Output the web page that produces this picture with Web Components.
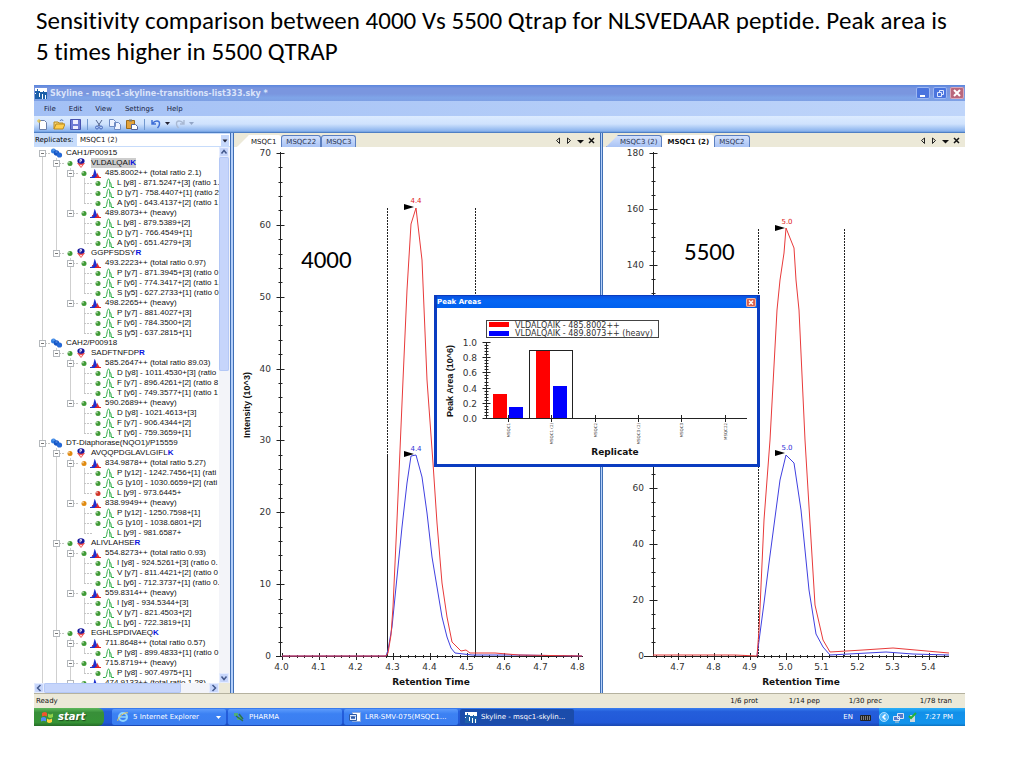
<!DOCTYPE html>
<html lang="en">
<head>
<meta charset="utf-8">
<title>Sensitivity comparison</title>
<style>
  body { margin: 0; background: #fff; color: #000; font-family: "DejaVu Sans", sans-serif; }
</style>
</head>
<body>
<slide-page>
  <span slot="title">Sensitivity comparison between 4000 Vs 5500 Qtrap for NLSVEDAAR peptide. Peak area is 5 times higher in 5500 QTRAP</span>
  <sky-window></sky-window>
</slide-page>

<script>
const define = (name, html, setup) => customElements.define(name, class extends HTMLElement {
  constructor() {
    super();
    this.attachShadow({ mode: 'open' });
  }
  connectedCallback() {
    const t = document.createElement('template');
    t.innerHTML = typeof html === 'function' ? html(this) : html;
    this.shadowRoot.replaceChildren(t.content.cloneNode(true));
    if (setup) setup(this);
  }
});

const BUTTON = `button { font: inherit; color: inherit; background: none; border: 0; padding: 0; margin: 0; text-align: left; white-space: nowrap; }`;

/* ---------- slide ---------- */
define('slide-page', `
<style>
  :host { display: block; padding: 5px 59px 42px 34px; }
  h1 { margin: 0 0 18px 2px; font: 400 25px/31px Carlito, Calibri, Lato, sans-serif; font-variant-ligatures: none; font-kerning: none; }
</style>
<h1><slot name="title"></slot></h1>
<slot></slot>`);

/* ---------- application window ---------- */
define('sky-window', `
<style>
  :host { display: block; font-size: 7px; line-height: 10px; }
  main { position: relative; display: grid; grid-template-columns: 196px 4px minmax(0, 366fr) 3px minmax(0, 362fr); border-top: 1px solid #4f7fc4; }
  .split { background: #b5d0fb; border: solid #3f6fb5; border-width: 0 1px; }
  peak-areas { position: absolute; left: 400px; top: 162px; width: 326px; }
</style>
<title-bar>Skyline - msqc1-skyline-transitions-list333.sky *</title-bar>
<menu-bar></menu-bar>
<tool-bar></tool-bar>
<main>
  <target-panel></target-panel>
  <div class="split"></div>
  <chart-pane chart="left"></chart-pane>
  <div class="split"></div>
  <chart-pane chart="right"></chart-pane>
  <peak-areas></peak-areas>
</main>
<status-bar></status-bar>
<task-bar></task-bar>`);

const LOGO = `<svg width="12" height="11" viewBox="0 0 12 11"><rect width="12" height="11" fill="#1d5fa8"/><path d="M0 0h12v4H9V3H8v1H5V3H3V1H2v2H0z" fill="#fff"/><path d="M0 5.500h1M4.500 5v4M7.500 6v5M10.500 7v4" stroke="#fff"/></svg>`;

define('title-bar', `
<style>
  ${BUTTON}
  :host { display: flex; align-items: center; gap: 3px; height: 16px; padding: 0 1px; background: linear-gradient(#5a86dd, #7a96df 20%, #7a96df 55%, #7fa5e8 80%, #7d9fe4); color: #d9e4fa; font: bold 8px/14px "DejaVu Sans", sans-serif; }
  span { flex: 1; white-space: nowrap; padding-top: 2px; }
  button { width: 14px; height: 12px; border-radius: 2px; background: #4a74de; box-shadow: inset 0 0 0 1px #9db8f2; }
  button.x { background: #b9677c; box-shadow: inset 0 0 0 1px #d9a9bb; }
  svg { display: block; }
</style>
${LOGO}<span><slot></slot></span>
<button aria-label="Minimize"><svg width="14" height="12"><path d="M4 9h5" stroke="#fff" stroke-width="2"/></svg></button>
<button aria-label="Restore"><svg width="14" height="12" fill="none" stroke="#dfe8ff"><path d="M6.500 5V3.500h4v4H9M4.500 5.500h4v4h-4z"/></svg></button>
<button class="x" aria-label="Close"><svg width="14" height="12"><path d="M4 3l6 6M10 3l-6 6" stroke="#fff" stroke-width="2"/></svg></button>`);

define('menu-bar', `
<style>
  ${BUTTON}
  :host { display: flex; gap: 13px; height: 15px; padding: 0 10px; line-height: 16px; background: linear-gradient(90deg, #a3c0f5, #b4cdf8 60%, #bfd5fa); color: #16223c; }
</style>
<button>File</button><button>Edit</button><button>View</button><button>Settings</button><button>Help</button>`);

define('tool-bar', `
<style>
  ${BUTTON}
  :host { display: flex; align-items: center; gap: 5px; height: 16px; padding: 0 3px; background: linear-gradient(#dcebff, #cfe2fd 50%, #8db5ee 92%, #6d9ddd); }
  svg { display: block; }
  i { width: 1px; height: 11px; background: #7098d0; margin: 0 1px; }
  .arrow { margin-left: -2px; }
</style>
<button aria-label="New"><svg width="11" height="11"><path d="M2.500 1.500h5l2 2v7h-7z" fill="#fff" stroke="#6b7fa8"/><path d="M0 2h4M2 0v4" stroke="#e6c33c"/></svg></button>
<button aria-label="Open"><svg width="12" height="11"><path d="M1 10V3h4l1 1h4v2" fill="#f5d679" stroke="#b98a20"/><path d="M1 10l2-5h9l-2 5z" fill="#ffcf4e" stroke="#b98a20"/><path d="M7 2c1-2 3-1 3 0" fill="none" stroke="#3b63b5"/></svg></button>
<button aria-label="Save"><svg width="11" height="11"><path d="M.5.5h10v10h-10z" fill="#6f7bd6" stroke="#4652b0"/><path d="M3 1h5v4H3zM3 7h5v3H3z" fill="#eef"/></svg></button>
<i></i>
<button aria-label="Cut"><svg width="10" height="11" fill="none"><path d="M2 1l4 6M8 1L4 7" stroke="#54658f"/><circle cx="3" cy="8.500" r="1.500" stroke="#4a68bd"/><circle cx="7" cy="8.500" r="1.500" stroke="#4a68bd"/></svg></button>
<button aria-label="Copy"><svg width="12" height="11" fill="#eef3ff" stroke="#6e8bc4"><path d="M.5.500h4l2 2v5h-6zM5.500 3.500h4l2 2v5h-6z"/></svg></button>
<button aria-label="Paste"><svg width="12" height="11"><path d="M.5 1.500h8v8h-8z" fill="#e3a33b" stroke="#9a6a1c"/><path d="M3 .500h3v2H3z" fill="#777"/><path d="M5.500 5.500h4l2 2v3h-6z" fill="#fff" stroke="#55659a"/></svg></button>
<i></i>
<button aria-label="Undo"><svg width="10" height="10" fill="none" stroke="#3f6fd6" stroke-width="1.500"><path d="M1 1v4h4M1.500 4.500C4 1 9 1 8.500 5c0 2-1 3-2 4"/></svg></button>
<svg class="arrow" width="6" height="4"><path d="M1 0h5L3.500 3z" fill="#223"/></svg>
<button aria-label="Redo"><svg width="10" height="10" fill="none" stroke="#a9b9d3" stroke-width="1.400"><path d="M9 1v4H5M8.500 4.500C6 1 1 1 1.500 5c0 2 1 3 2 4"/></svg></button>
<svg class="arrow" width="6" height="4"><path d="M1 0h5L3.500 3z" fill="#93a6c6"/></svg>`);

/* ---------- tree ---------- */
/* [level, text, dot colour]; peptides end in a highlighted residue */
const TREE = [
  [0,'CAH1/P00915'],
  [1,'VLDALQAIK','g'],
  [2,'485.8002++ (total ratio 2.1)','g'],[3,'L [y8] - 871.5247+[3] (ratio 1.','g'],[3,'D [y7] - 758.4407+[1] (ratio 2','g'],[3,'A [y6] - 643.4137+[2] (ratio 1','g'],
  [2,'489.8073++ (heavy)','g'],[3,'L [y8] - 879.5389+[2]','g'],[3,'D [y7] - 766.4549+[1]','g'],[3,'A [y6] - 651.4279+[3]','g'],
  [1,'GGPFSDSYR','g'],
  [2,'493.2223++ (total ratio 0.97)','g'],[3,'P [y7] - 871.3945+[3] (ratio 0','g'],[3,'F [y6] - 774.3417+[2] (ratio 1.','g'],[3,'S [y5] - 627.2733+[1] (ratio 0','g'],
  [2,'498.2265++ (heavy)','g'],[3,'P [y7] - 881.4027+[3]','g'],[3,'F [y6] - 784.3500+[2]','g'],[3,'S [y5] - 637.2815+[1]','g'],
  [0,'CAH2/P00918'],
  [1,'SADFTNFDPR','g'],
  [2,'585.2647++ (total ratio 89.03)','g'],[3,'D [y8] - 1011.4530+[3] (ratio','g'],[3,'F [y7] - 896.4261+[2] (ratio 8','g'],[3,'T [y6] - 749.3577+[1] (ratio 1','g'],
  [2,'590.2689++ (heavy)','g'],[3,'D [y8] - 1021.4613+[3]','g'],[3,'F [y7] - 906.4344+[2]','g'],[3,'T [y6] - 759.3659+[1]','g'],
  [0,'DT-Diaphorase(NQO1)/P15559'],
  [1,'AVQQPDGLAVLGIFLK','o'],
  [2,'834.9878++ (total ratio 5.27)','o'],[3,'P [y12] - 1242.7456+[1] (rati','g'],[3,'G [y10] - 1030.6659+[2] (rati','g'],[3,'L [y9] - 973.6445+','r'],
  [2,'838.9949++ (heavy)','o'],[3,'P [y12] - 1250.7598+[1]','g'],[3,'G [y10] - 1038.6801+[2]','g'],[3,'L [y9] - 981.6587+',''],
  [1,'ALIVLAHSER','g'],
  [2,'554.8273++ (total ratio 0.93)','g'],[3,'I [y8] - 924.5261+[3] (ratio 0.','g'],[3,'V [y7] - 811.4421+[2] (ratio 0','g'],[3,'L [y6] - 712.3737+[1] (ratio 0.','g'],
  [2,'559.8314++ (heavy)','g'],[3,'I [y8] - 934.5344+[3]','g'],[3,'V [y7] - 821.4503+[2]','g'],[3,'L [y6] - 722.3819+[1]','g'],
  [1,'EGHLSPDIVAEQK','g'],
  [2,'711.8648++ (total ratio 0.57)','g'],[3,'P [y8] - 899.4833+[1] (ratio 0','g'],
  [2,'715.8719++ (heavy)','g'],[3,'P [y8] - 907.4975+[1]','g'],
  [2,'474.9133++ (total ratio 1.28)','g']
];
const DOTS = { g: '#3f9a35', o: '#e08a10', r: '#d03328' };
const ICONS = [
  '<circle cx="2.500" cy="3" r="2.500" fill="#2f7de0"/><circle cx="5.500" cy="5" r="2.700" fill="#1656c4"/><circle cx="8.500" cy="7" r="2.600" fill="#2468d6"/><path d="M1.500 2h2M4.500 4h2" stroke="#9cc6ff" stroke-width=".7"/>',
  '<path d="M0 5h8L4 10z" fill="#ef5050"/><path d="M3 7h2L4 9z" fill="#fff"/><ellipse cx="4" cy="3" rx="3.600" ry="2.800" fill="#15159c"/><path d="M3 4.500V1.500h1.500v1.500H3" fill="none" stroke="#fff" stroke-width=".8"/>',
  '<path d="M1 9C3 8.500 3.500 6 4.500 1 5.500 1 6.500 8 9 9z" fill="#1c2fd0"/><path d="M7 4.500l2.500 4.500H6.500z" fill="#e83030"/><path d="M0 9.500h5" stroke="#1c2fd0"/><path d="M5 9.500h6M2 8l1.500-1" stroke="#e02020"/>',
  '<path d="M0 9.500h2.500C4 9 4 1 5.500 1S6.500 6 7 9M6.500 5c1-1.500 1.500 0 2 4.500H11" fill="none" stroke="#2fae48" stroke-width="1"/>'
];
const guides = TREE.map(([level], i) => {
  const out = [];
  for (let c = 0; c <= level; c++) {
    const next = TREE.slice(i + 1).find(n => n[0] <= c);
    const more = next ? next[0] === c : c < 2;
    const top = c === level && i === 0 ? 5 : 0;
    if (c === level) out.push([c, top, more ? 10 : 5]);
    else if (more) out.push([c, 0, 10]);
  }
  return out;
});
define('tree-row', el => {
  const i = +el.getAttribute('index'), [level, text, dot] = TREE[i];
  const hasDot = level > 0, x = level * 14 + 7, iconX = level === 0 ? 16 : (level + 2) * 14 - (level === 3 ? 2 : level - 1);
  const width = (level + (hasDot ? 3 : 2)) * 14 + (level === 0 ? 3 : level === 3 ? -2 : 0);
  let s = guides[i].map(([c, a, b]) => `<path d="M${c * 14 + 7.5} ${a}V${b}" stroke="#cfcfcf"/>`).join('');
  s += `<path d="M${x} 5.500h${level === 0 ? 8 : 9}" stroke="#c4c4c4" stroke-dasharray="2 1"/>`;
  if (level < 3) s += `<rect x="${x - 2.5}" y="2.500" width="6" height="6" fill="#fff" stroke="#b4b8bc"/><path d="M${x - 1} 5.500h3" stroke="#777"/>`;
  if (dot) s += `<circle cx="${x + 14}" cy="5.500" r="2.500" fill="${DOTS[dot]}"/><circle cx="${x + 13}" cy="4.500" r=".9" fill="#fff" opacity=".6"/>`;
  s += `<g transform="translate(${iconX} 0)">${ICONS[level]}</g>`;
  const label = level === 1 ? `${text.slice(0, -1)}<b>${text.slice(-1)}</b>` : text;
  return `<style>
    :host { display: flex; height: 10px; font: 8px/10px "Liberation Sans", Arial, sans-serif; color: #111; white-space: nowrap; }
    svg { flex: none; display: block; }
    b { color: #0a14e0; }
    .sel { background: #cdcdcd; }
  </style><svg width="${width}" height="10">${s}</svg><span class="${i === 1 ? 'sel' : ''}">${label}</span>`;
});

define('scroll-bar', el => {
  const v = el.hasAttribute('vertical');
  return `<style>
    ${BUTTON}
    :host { display: flex; flex-direction: ${v ? 'column' : 'row'}; background: #f3f4f9; }
    button { flex: none; width: 10px; height: 10px; border-radius: 2px; background: #c6d5fb; box-shadow: inset 0 0 0 1px #e6edff; }
    svg { display: block; }
    div { flex: 0 0 ${v ? '40%' : '74%'}; width: ${v ? '10px' : 'auto'}; border-radius: 2px; background: #c6d5fb; box-shadow: inset 0 0 0 1px #b4c8f6; }
    i { flex: 1; }
  </style>
  <button aria-label="Back"><svg width="10" height="10" fill="none" stroke="#44598c" stroke-width="1.500"><path d="${v ? 'M2.500 6.500l2.500-3 2.500 3' : 'M6.500 2l-3 3 3 3'}"/></svg></button>
  <div></div><i></i>
  <button aria-label="Forward"><svg width="10" height="10" fill="none" stroke="#44598c" stroke-width="1.500"><path d="${v ? 'M2.500 3.500l2.500 3 2.500-3' : 'M3.500 2l3 3-3 3'}"/></svg></button>`;
});

define('target-panel', `
<style>
  :host { display: grid; grid-template-columns: minmax(0, 1fr) 11px; grid-template-rows: 14px minmax(0, 1fr) 10px; background: #fff; }
  header { grid-column: 1 / 3; display: flex; align-items: center; background: #c7dcfb; }
  label { width: 42px; padding-left: 1px; }
  .box { position: relative; flex: 1; height: 12px; }
  select { appearance: none; width: 100%; height: 12px; box-sizing: border-box; border: 0; border-radius: 0; margin: 0; padding: 0 12px 0 3px; background: #fff; font: 7px/12px "DejaVu Sans", sans-serif; color: #111; display: block; }
  .box svg { position: absolute; right: 1px; top: 1px; background: #c6d8fb; pointer-events: none; }
  .tree { contain: size; overflow: hidden; padding: 1px 0 0 1px; }
  .corner { background: #ece9d8; }
</style>
<header><label for="rep">Replicates:</label><div class="box"><select id="rep"><option>MSQC1 (2)</option></select><svg width="8" height="11"><path d="M1.500 4.500h5l-2.500 3z" fill="#223"/></svg></div></header>
<div class="tree" role="tree">${TREE.map((_, i) => `<tree-row role="treeitem" index="${i}"></tree-row>`).join('')}</div>
<scroll-bar vertical></scroll-bar>
<scroll-bar></scroll-bar>
<div class="corner"></div>`);

/* ---------- charts ---------- */
const line = (x1, y1, x2, y2, extra = '') => `<path d="M${x1} ${y1}L${x2} ${y2}" stroke="#222" ${extra}/>`;
const CHARTS = {
  left: {
    view: '234 147 366 546', axisX: 280.5, xStart: 282, xEnd: 583, x0: 282, xStep: 37, xFrom: 40, xCount: 9, minorFirst: 0,
    yStep: 71.86, yMax: 70, yUnit: 10, minors: 5, labelX: 271, title: 'Intensity (10^3)',
    tabs: [['MSQC1', 'plain'], ['MSQC22', ''], ['MSQC3', '']], tag: ['4000', 301, 268], xTitle: 431,
    red: '282,656 386,656 388,653 391,635 393,607 397,520 403,380 407,290 411,224 416,208 422,260 427,380 433,463 437,523 442,583 447,617 452,642 456,646 461,651 466,650 470,653 495,653 519,655 582,656',
    blue: '282,656 386,656 388,650 392,627 397,577 402,527 407,483 411,456 416,455 422,477 427,513 432,557 437,587 442,617 447,637 451,648 455,653 472,655 515,655 582,656',
    bounds: [387.5, 475.5, 208, 455], peaks: [[416, 203, '4.4', 'red', 207], [416, 451, '4.4', 'blue', 454]]
  },
  right: {
    view: '603 147 362 546', axisX: 653.5, xStart: 650, xEnd: 949, x0: 678, xStep: 35.9, xFrom: 47, xCount: 8, minorFirst: -3,
    yStep: 55.9, yMax: 180, yUnit: 20, minors: 4, labelX: 644, title: '',
    tabs: [['MSQC3 (2)', ''], ['MSQC1 (2)', 'on'], ['MSQC2', '']], tag: ['5500', 684, 260], xTitle: 801,
    red: '653,655 735,655 757,656 759,630 764,520 770,440 777,310 780,280 784,253 786,228 794,248 796,280 799,310 805,440 810,523 815,605 823,640 830,652 863,650 893,648 949,653',
    blue: '757,656 764,603 769,563 776,510 780,480 786,455 794,463 801,510 809,590 816,634 823,647 830,655 886,652 913,654 949,655',
    bounds: [758.5, 844.5, 229, 656], peaks: [[787, 224, '5.0', 'red', 228], [787, 450, '5.0', 'blue', 453]]
  }
};
const COLORS = { red: '#e83a3a', blue: '#4040e0' };

define('chrom-chart', el => {
  const c = CHARTS[el.getAttribute('name')];
  let s = line(c.axisX, 152, c.axisX, 656) + line(c.xStart - 6, 656.5, c.xEnd, 656.5);
  const n = c.yMax / c.yUnit;
  for (let i = 0; i <= n; i++) {
    const y = Math.round(656 - i * c.yStep);
    s += line(c.axisX - 4, y + .5, c.axisX + 4, y + .5) + `<text x="${c.labelX}" y="${y + 3}" text-anchor="end">${i * c.yUnit}</text>`;
    if (i < n) for (let m = 1; m < c.minors; m++) {
      const my = Math.round(656 - (i + m / c.minors) * c.yStep) + .5;
      s += line(c.axisX - 2, my, c.axisX + 2, my);
    }
  }
  for (let k = c.minorFirst; c.x0 + k * c.xStep / 5 < c.xEnd; k++) {
    const x = Math.round(c.x0 + k * c.xStep / 5) + .5, major = k % 5 === 0;
    s += line(x, major ? 653 : 655, x, major ? 660 : 658);
    if (major) s += `<text x="${x - 1}" y="670" text-anchor="middle">${((c.xFrom + k / 5) / 10).toFixed(1)}</text>`;
  }
  const [bx1, bx2, top, solid] = c.bounds;
  for (const x of [bx1, bx2]) s += line(x, top, x, solid, 'stroke-dasharray="2 1"') + (solid < 656 ? line(x, solid, x, 656) : '');
  for (const k of ['blue', 'red']) s += `<polyline points="${c[k]}" fill="none" stroke="${COLORS[k]}" stroke-width="1"/>`;
  for (const [x, y, t, k, ty] of c.peaks)
    s += `<text class="peak ${k}" x="${x}" y="${y}" text-anchor="middle">${t}</text><path d="M${x - 12} ${ty - 3}l10 3-10 3z" fill="#000"/>`;
  if (c.title) s += `<text class="side" x="250" y="405" text-anchor="middle" transform="rotate(-90 250 405)">${c.title}</text>`;
  s += `<text class="axis" x="${c.xTitle}" y="685" text-anchor="middle">Retention Time</text>`;
  s += `<text class="tag" x="${c.tag[1]}" y="${c.tag[2]}">${c.tag[0]}</text>`;
  return `<style>
    :host { display: block; background: #fff; }
    svg { display: block; width: 100%; height: auto; }
    text { font: 9px "DejaVu Sans", sans-serif; fill: #333; }
    .peak { font-size: 7px; }
    .red { fill: #e02020; }
    .blue { fill: #3030d8; }
    .side { font: bold 9px "Liberation Sans", sans-serif; fill: #111; }
    .axis { font-weight: bold; fill: #111; }
    .tag { font: 25px Carlito, Calibri, "Open Sans", sans-serif; fill: #000; }
  </style><svg viewBox="${c.view}" role="img">${s}</svg>`;
});

define('chart-pane', el => {
  const name = el.getAttribute('chart'), c = CHARTS[name];
  return `<style>
    ${BUTTON}
    :host { display: block; min-width: 0; background: #fff; }
    nav { display: flex; align-items: flex-end; height: 14px; padding-left: 3px; background: #ece9d8; box-sizing: border-box; color: #2a3550; }
    .tab { height: 12px; line-height: 12px; padding: 0 4px; background: linear-gradient(#d3e1fc, #a9c3f5); border: 1px solid #5b7fc0; border-bottom: 0; border-radius: 3px 3px 0 0; }
    .tab:first-of-type { padding-left: 13px; clip-path: polygon(12px 0, 100% 0, 100% 100%, 0 100%); }
    .plain, .on { background: #fff; border-color: #fff; color: #111; }
    .on { font-weight: bold; }
    .gap { flex: 1; }
    .tools { display: flex; gap: 2px; padding-right: 4px; }
    .tools svg { display: block; }
  </style>
  <nav>${c.tabs.map(([t, k]) => `<button class="tab ${k}">${t}</button>`).join('')}
    <span class="gap"></span>
    <span class="tools">
      <button aria-label="Previous"><svg width="9" height="13"><path d="M5.500 4v5.500L2.500 6.500z" fill="none" stroke="#222"/></svg></button>
      <button aria-label="Next"><svg width="9" height="13"><path d="M2.500 4v5.500l3-3z" fill="none" stroke="#222"/></svg></button>
      <button aria-label="List"><svg width="9" height="13"><path d="M1 6h7L4.500 9.500z" fill="#111"/></svg></button>
      <button aria-label="Close"><svg width="9" height="13"><path d="M2 4l5 5M7 4L2 9" stroke="#111" stroke-width="1.500"/></svg></button>
    </span>
  </nav>
  <chrom-chart name="${name}"></chrom-chart>`;
});

/* ---------- floating bar chart ---------- */
define('peak-areas', () => {
  let s = '<rect x="486.500" y="320.500" width="172" height="17" fill="#fff" stroke="#444"/><rect x="489" y="322" width="20" height="5" fill="#f00"/><rect x="489" y="331" width="20" height="5" fill="#00f"/>';
  s += '<text class="legend" x="515" y="328">VLDALQAIK - 485.8002++</text><text class="legend" x="515" y="336">VLDALQAIK - 489.8073++ (heavy)</text>';
  s += '<rect x="529.500" y="350.500" width="43" height="68" fill="#fff" stroke="#222"/>';
  for (const [x, y, f] of [[493, 394, '#f00'], [509, 407, '#00f'], [536, 351, '#f00'], [553, 386, '#00f']])
    s += `<rect x="${x}" y="${y}" width="14" height="${418 - y}" fill="${f}"/>`;
  s += line(486.5, 342, 486.5, 418) + line(483, 418.5, 747, 418.5);
  for (let i = 0; i <= 25; i++) {
    const y = Math.round(418 - i * 76 / 25) + .5, major = i % 5 === 0;
    s += line(486.5 - (major ? 4 : 2), y, 486.5 + (major ? 4 : 2), y);
    if (major) s += `<text x="477" y="${y + 3}" text-anchor="end">${(i / 25).toFixed(1)}</text>`;
  }
  ['MSQC1', 'MSQC1 (2)', 'MSQC2', 'MSQC3 (2)', 'MSQC3', 'MSQC22'].forEach((t, i) => {
    const x = Math.round(508 + i * 43.3);
    s += line(x + .5, 415, x + .5, 422) + `<text class="tiny" x="${x + 2}" y="423" text-anchor="end" transform="rotate(-90 ${x + 2} 423)">${t}</text>`;
  });
  s += '<text class="side" x="453" y="381" text-anchor="middle" transform="rotate(-90 453 381)">Peak Area (10^6)</text><text class="axis" x="615" y="455" text-anchor="middle">Replicate</text>';
  return `<style>
    ${BUTTON}
    :host { display: block; background: #fff; border: 3px solid #0a3cc0; border-top-width: 1px; box-sizing: border-box; }
    header { display: flex; align-items: center; justify-content: space-between; height: 12px; background: linear-gradient(#0a52e0, #0466f4 40%, #0060ee); color: #fff; font: bold 7px/12px "DejaVu Sans", sans-serif; }
    button { width: 10px; height: 9px; margin-right: 1px; border-radius: 2px; background: #d8604a; box-shadow: inset 0 0 0 1px #f0b8a8; }
    svg { display: block; }
    .plot { width: 100%; height: auto; }
    text { font: 9px "DejaVu Sans", sans-serif; fill: #333; }
    .legend { font-size: 8px; }
    .tiny { font: 4px "DejaVu Sans", sans-serif; }
    .side { font: bold 9px "Liberation Sans", sans-serif; fill: #111; }
    .axis { font-weight: bold; fill: #111; }
  </style>
  <header><span>Peak Areas</span><button aria-label="Close"><svg width="10" height="9"><path d="M3 2.500l4 4M7 2.500l-4 4" stroke="#fff" stroke-width="1.500"/></svg></button></header>
  <svg class="plot" viewBox="437 308 320 156" role="img">${s}</svg>`;
});

/* ---------- status bar and task bar ---------- */
define('status-bar', `
<style>
  :host { display: flex; align-items: center; height: 15px; padding: 0 13px 0 2px; box-sizing: border-box; background: #ece9d8; border-top: 1px solid #b5b29f; color: #111; }
  span { flex: 1; }
  b { font-weight: normal; text-align: right; width: 62px; }
  b:last-child { width: 70px; }
</style>
<span>Ready</span><b>1/6 prot</b><b>1/14 pep</b><b>1/30 prec</b><b>1/78 tran</b>`);

define('task-bar', `
<style>
  ${BUTTON}
  :host { display: flex; align-items: stretch; height: 18px; background: linear-gradient(#3a7ff0, #245edb 20%, #2159d8 80%, #1a47b0); color: #fff; line-height: 16px; }
  svg { display: block; flex: none; }
  .start { display: flex; align-items: center; gap: 4px; width: 70px; padding-left: 7px; box-sizing: border-box; border-radius: 0 6px 6px 0; background: linear-gradient(#5eb85c, #388f39 25%, #369336 80%, #256c27); font: italic bold 10px/16px "DejaVu Sans", sans-serif; text-shadow: 1px 1px 1px #1c4a1c; margin-right: 8px; }
  .task { display: flex; align-items: center; gap: 4px; width: 114px; margin: 1px 2px 1px 0; padding: 0 5px; box-sizing: border-box; border-radius: 2px; background: linear-gradient(#5c9bfb, #3c81f3 30%, #3a7df0); }
  .task span { flex: 1; }
  .on { background: #1b4cab; }
  .gap { flex: 1; }
  .lang { display: flex; align-items: center; gap: 7px; padding-right: 8px; }
  .tray { display: flex; align-items: center; gap: 4px; width: 86px; padding-right: 12px; box-sizing: border-box; background: linear-gradient(#2bb0f8, #1290e9 25%, #1394ec 85%, #0d72c0); }
  .tray span { flex: 1; text-align: right; }
</style>
<button class="start"><svg width="13" height="12"><path d="M1 2q3-2 5 0v3.500Q4 4 1 5.500z" fill="#f0562d"/><path d="M7 2.500q2 2 5 0V6q-3 2-5 0z" fill="#8fd14b"/><path d="M0 7q3-2 5 0v3.500Q3 9 0 10.500z" fill="#4c8df5"/><path d="M6 7.500q2 2 5 0V11q-3 2-5 0z" fill="#ffd13f"/></svg>start</button>
<button class="task"><svg width="12" height="12" fill="none"><circle cx="6" cy="6" r="4" stroke="#8fd4ff" stroke-width="2"/><path d="M3 6h6" stroke="#8fd4ff" stroke-width="1.500"/><path d="M1 10C-1 8 8 0 11 2" stroke="#f3cf57"/></svg><span>5 Internet Explorer</span><svg width="5" height="3"><path d="M0 0h5L2.500 3z" fill="#fff"/></svg></button>
<button class="task"><svg width="12" height="12"><path d="M1 2h4v3H1zM4 6h5v3H4z" fill="#4fae7c"/><path d="M3 5l7 5M6 3l4 5" stroke="#2d7150" stroke-width="1.500"/></svg><span>PHARMA</span></button>
<button class="task"><svg width="12" height="12"><path d="M3.500 1.500h8v9h-8z" fill="#fff" stroke="#8da9dc"/><path d="M.5 3.500h7v6h-7z" fill="#e8f0ff" stroke="#2c5aa8"/><path d="M2 5l1 3 1-3 1 3 1-3" fill="none" stroke="#2c5aa8"/></svg><span>LRR-SMV-075(MSQC1...</span></button>
<button class="task on">${LOGO}<span>Skyline - msqc1-skylin...</span></button>
<span class="gap"></span>
<span class="lang"><span>EN</span><svg width="11" height="8"><rect y="2" width="11" height="6" rx="1" fill="#222"/><path d="M1 4h9M1 6h9" stroke="#ddd" stroke-dasharray="1 1"/></svg></span>
<span class="tray"><svg width="10" height="12"><circle cx="5" cy="6" r="4.500" fill="#4fb5fb" stroke="#a5dcff"/><path d="M6.500 3.500L4 6l2.500 2.500" fill="none" stroke="#fff" stroke-width="1.500"/></svg><svg width="11" height="11"><path d="M4.500 1.500h6v5h-6zM.5 4.500h6v4h-6z" fill="#5579c9" stroke="#dde6f7"/><path d="M2 10h4" stroke="#ccc"/></svg><svg width="9" height="11"><path d="M2 3h5v7H2z" fill="#cfd8dc"/><path d="M1 4l2 2 5-5" fill="none" stroke="#23b23b" stroke-width="2"/></svg><span>7:27 PM</span></span>`);
</script>
</body>
</html>
